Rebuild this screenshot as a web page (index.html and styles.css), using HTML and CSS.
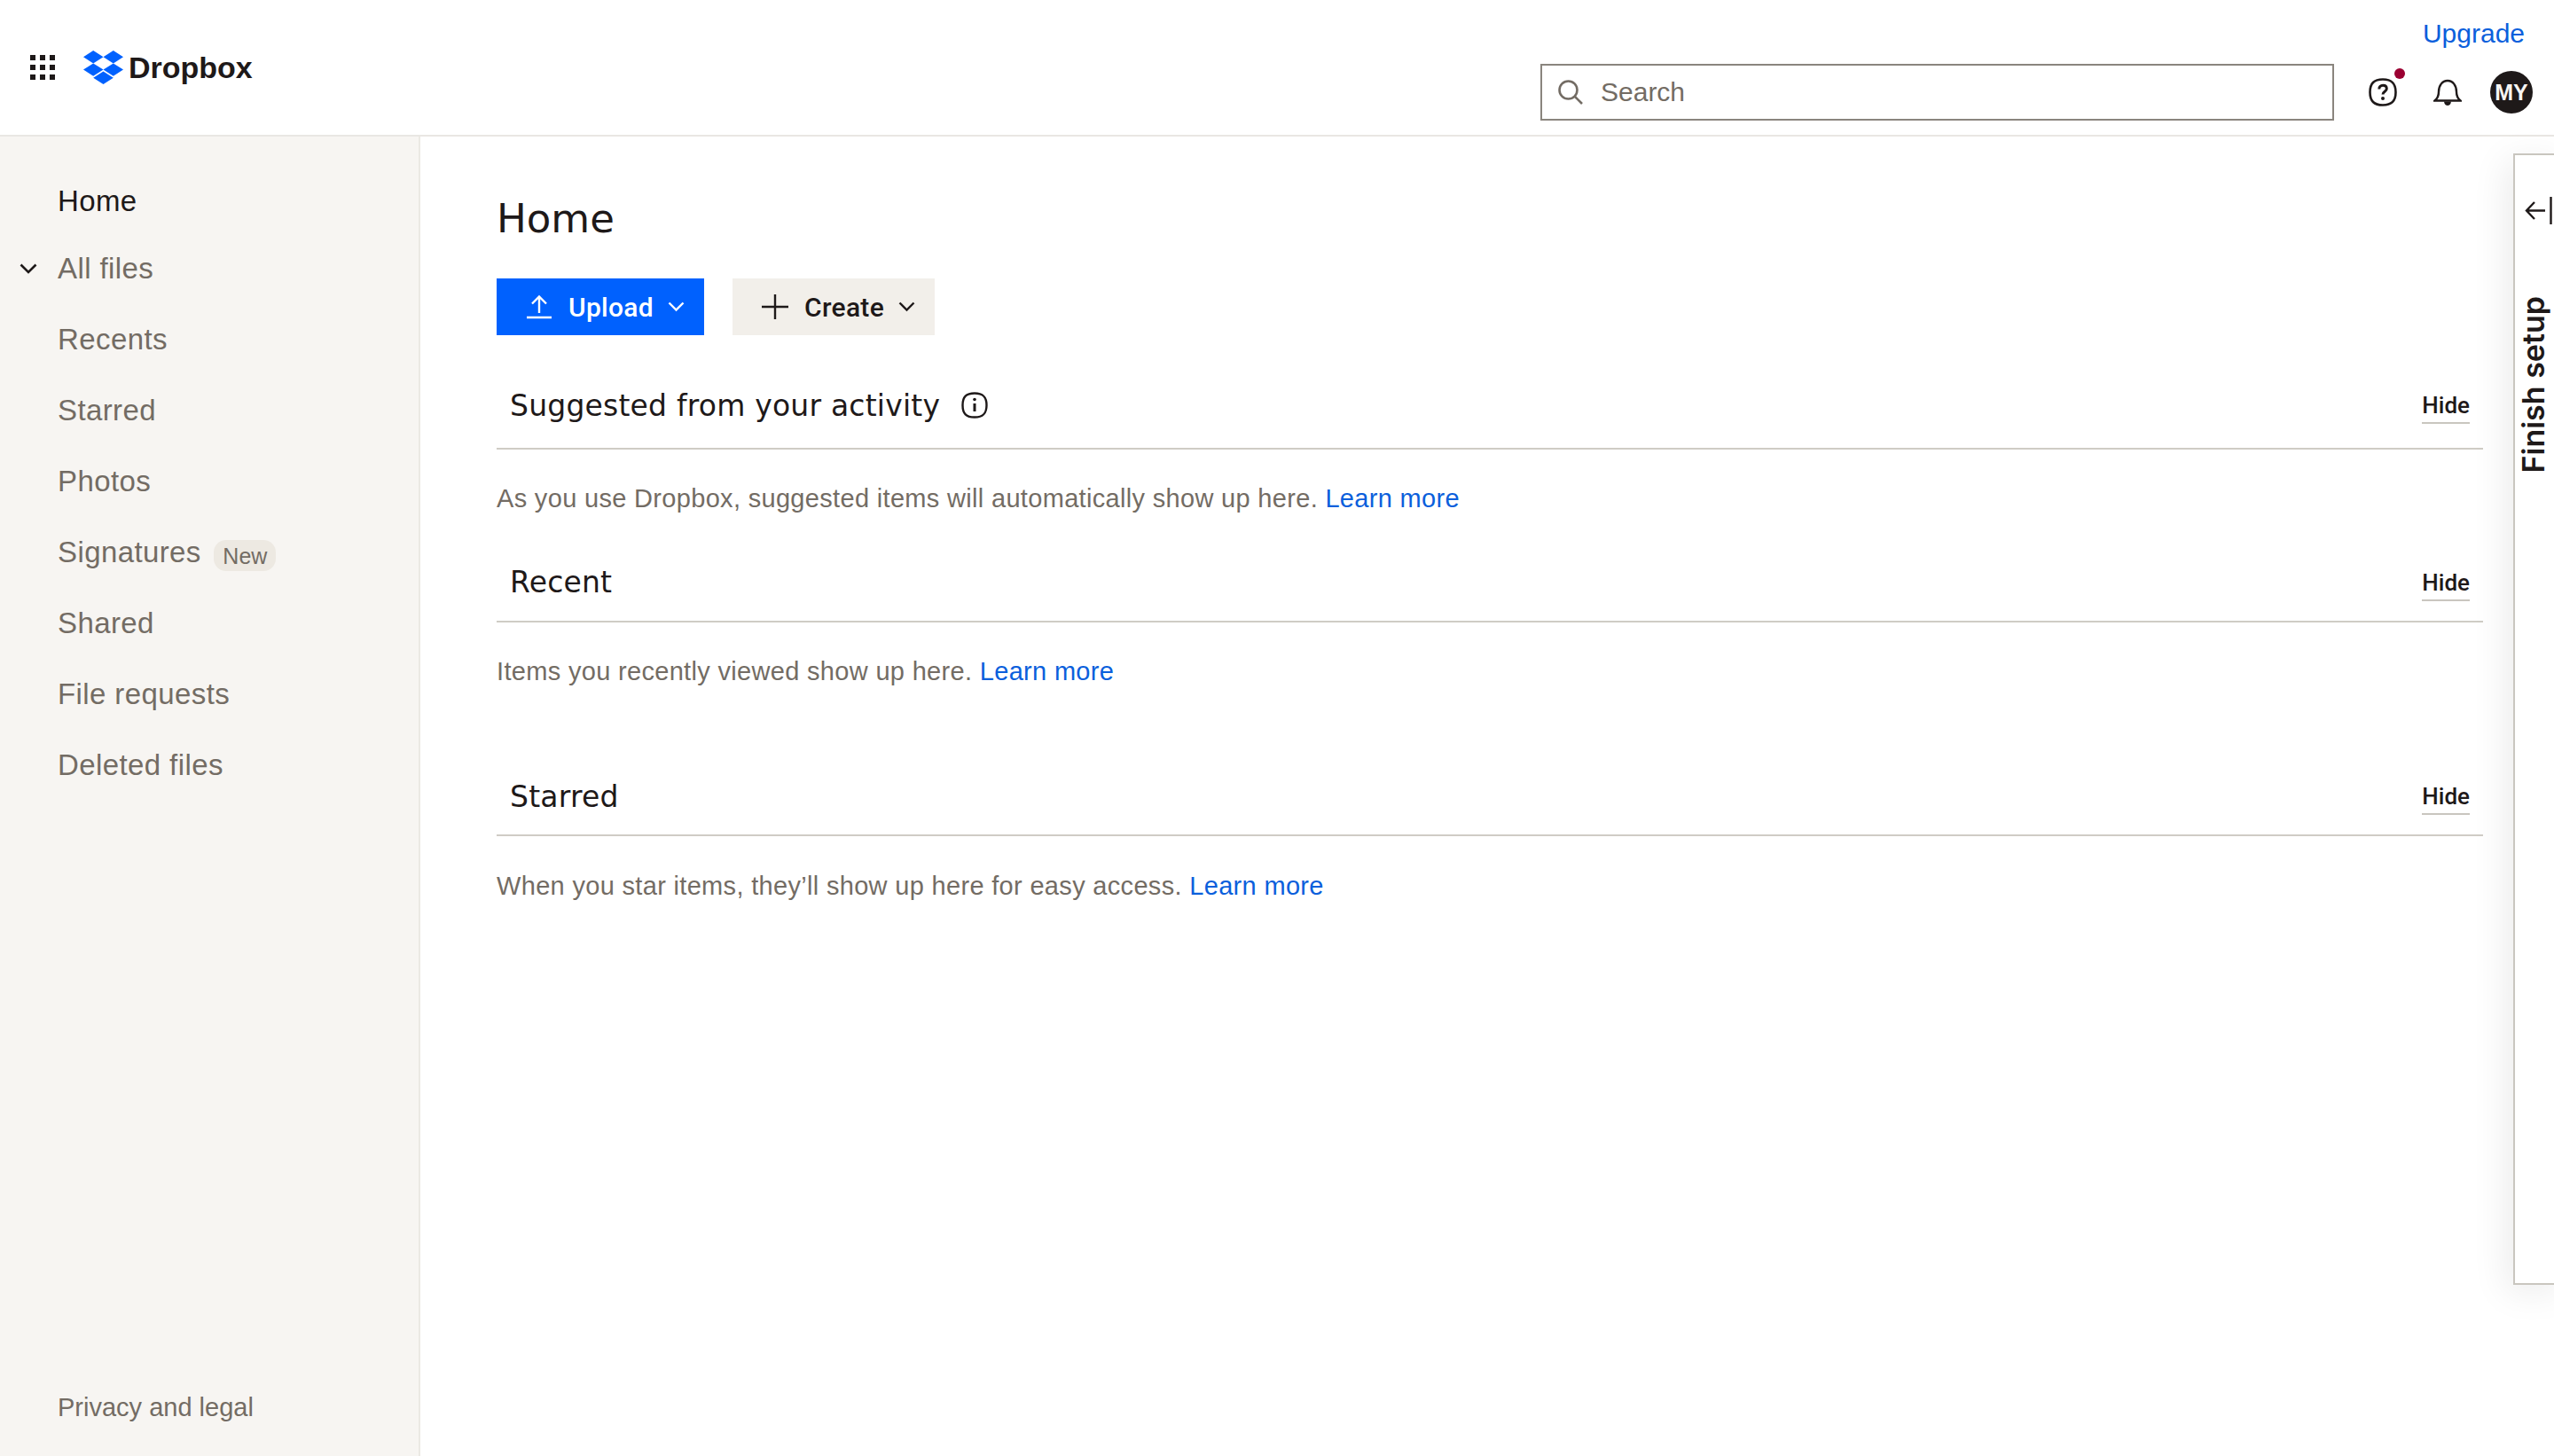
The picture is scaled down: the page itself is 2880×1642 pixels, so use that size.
FILE: index.html
```html
<!DOCTYPE html>
<html lang="en">
<head>
  <meta charset="UTF-8">
  <meta name="viewport" content="width=device-width, initial-scale=1.0">
  <title>Dropbox - Home</title>
  <link rel="stylesheet" href="styles.css">
</head>
<body>
  <header class="topbar">
    <div class="brand">
      <svg class="app-grid" viewBox="0 0 28 28" width="28" height="28" fill="#1e1919">
        <rect x="0" y="0" width="6" height="6"/><rect x="11" y="0" width="6" height="6"/><rect x="22" y="0" width="6" height="6"/>
        <rect x="0" y="11" width="6" height="6"/><rect x="11" y="11" width="6" height="6"/><rect x="22" y="11" width="6" height="6"/>
        <rect x="0" y="22" width="6" height="6"/><rect x="11" y="22" width="6" height="6"/><rect x="22" y="22" width="6" height="6"/>
      </svg>
      <svg class="logo-mark" viewBox="0 0 45 38" width="45" height="38" fill="#0061fe">
        <polygon points="11.2,0 22.5,7.2 11.2,14.4 0,7.2"/>
        <polygon points="33.8,0 45,7.2 33.8,14.4 22.5,7.2"/>
        <polygon points="11.2,14.4 22.5,21.6 11.2,28.8 0,21.6"/>
        <polygon points="33.8,14.4 45,21.6 33.8,28.8 22.5,21.6"/>
        <polygon points="22.5,23.6 33.8,30.8 22.5,38 11.2,30.8"/>
      </svg>
      <span class="logo-text">Dropbox</span>
    </div>
    <div class="top-right">
      <a class="upgrade" href="#">Upgrade</a>
      <div class="top-tools">
        <div class="search">
          <svg viewBox="0 0 28 28" width="28" height="28" fill="none" stroke="#736c64" stroke-width="2.6">
            <circle cx="11.500" cy="11.500" r="10"/><path d="M18.500 18.500l8.500 8.500"/>
          </svg>
          <span>Search</span>
        </div>
        <div class="help">
          <svg viewBox="0 0 32 32" width="32" height="32" fill="none" stroke="#1e1919" stroke-width="2.6">
            <path d="M16 1.500c10 0 14.500 4.500 14.500 14.500s-4.500 14.500-14.500 14.500s-14.500-4.500-14.500-14.500s4.500-14.500 14.500-14.500z"/>
            <path d="M11.800 12.500c0-2.800 1.800-4.300 4.300-4.300s4.200 1.500 4.200 3.800c0 3.300-4.300 3.300-4.300 6.500" stroke-width="3"/>
            <circle cx="16" cy="23" r="2" fill="#1e1919" stroke="none"/>
          </svg>
          <i class="help-dot"></i>
        </div>
        <svg class="bell" viewBox="0 0 32 32" width="32" height="32" fill="none" stroke="#1e1919" stroke-width="2.400">
          <path d="M1.500 25.500c2.500-2 4.500-4 4.500-10c0-7 4-12.500 10-12.500s10 5.500 10 12.500c0 6 2 8 4.500 10z"/>
          <path d="M12 26.500c.5 6 7.500 6 8 0z" fill="#1e1919" stroke="none"/>
        </svg>
        <div class="avatar">MY</div>
      </div>
    </div>
  </header>

  <div class="layout">
    <nav class="sidebar">
      <ul class="nav-list">
        <li class="nav-item active">Home</li>
        <li class="nav-item nav-files">
          <svg class="nav-caret" viewBox="0 0 20 12" width="20" height="12" fill="none" stroke="#1e1919" stroke-width="2.600"><path d="M1.500 1.500l8.500 8.500l8.500-8.500"/></svg>
          All files
        </li>
        <li class="nav-item">Recents</li>
        <li class="nav-item">Starred</li>
        <li class="nav-item">Photos</li>
        <li class="nav-item">Signatures <span class="badge">New</span></li>
        <li class="nav-item">Shared</li>
        <li class="nav-item">File requests</li>
        <li class="nav-item">Deleted files</li>
      </ul>
      <a class="legal" href="#">Privacy and legal</a>
    </nav>

    <main class="content">
      <h1 class="page-title">Home</h1>
      <div class="actions">
        <button class="btn btn-primary">
          <svg class="btn-icon" viewBox="0 0 30 28" width="30" height="28" fill="none" stroke="#fff" stroke-width="2.400"><path d="M15 21V3M7 10.500l8-8l8 8M1 26h28"/></svg>
          Upload
          <svg class="btn-caret" viewBox="0 0 19 12" width="19" height="12" fill="none" stroke="#fff" stroke-width="2.400"><path d="M1.500 1.500l8 8l8-8"/></svg>
        </button>
        <button class="btn btn-secondary">
          <svg class="btn-icon" viewBox="0 0 30 30" width="30" height="30" fill="none" stroke="#1e1919" stroke-width="2.400"><path d="M15 1v28M0 15h30"/></svg>
          Create
          <svg class="btn-caret" viewBox="0 0 19 12" width="19" height="12" fill="none" stroke="#1e1919" stroke-width="2.400"><path d="M1.500 1.500l8 8l8-8"/></svg>
        </button>
      </div>

      <section class="block block-suggested">
        <div class="block-head">
          <h2>Suggested from your activity</h2>
          <svg class="info" viewBox="0 0 30 30" width="30" height="30" fill="none" stroke="#1e1919" stroke-width="2.400">
            <path d="M15 1.500c9.500 0 13.500 4 13.500 13.500s-4 13.500-13.500 13.500s-13.500-4-13.500-13.500s4-13.500 13.500-13.500z"/>
            <path d="M15 13v9" stroke-width="3"/><circle cx="15" cy="8.500" r="1.800" fill="#1e1919" stroke="none"/>
          </svg>
          <a class="hide" href="#">Hide</a>
        </div>
        <p>As you use Dropbox, suggested items will automatically show up here. <a href="#">Learn more</a></p>
      </section>

      <section class="block block-recent">
        <div class="block-head">
          <h2>Recent</h2>
          <a class="hide" href="#">Hide</a>
        </div>
        <p>Items you recently viewed show up here. <a href="#">Learn more</a></p>
      </section>

      <section class="block block-starred">
        <div class="block-head">
          <h2>Starred</h2>
          <a class="hide" href="#">Hide</a>
        </div>
        <p>When you star items, they’ll show up here for easy access. <a href="#">Learn more</a></p>
      </section>
    </main>
  </div>

  <aside class="setup-panel">
    <svg class="setup-icon" viewBox="0 0 32 31" width="32" height="31" fill="none" stroke="#1e1919" stroke-width="2.400">
      <path d="M23 15.500H2M11 6L2 15.500l9 9.500M29.500 0v31"/>
    </svg>
    <span class="setup-label">Finish setup</span>
  </aside>
</body>
</html>
```

FILE: styles.css
```css
* {
  box-sizing: border-box;
}

html, body {
  height: 100%;
}

body {
  margin: 0;
  overflow: hidden;
  background: #fff;
  color: #1e1919;
  font-family: "Liberation Sans", Arial, sans-serif;
}

a {
  color: #0b5fdc;
  text-decoration: none;
}

/* top bar */
.topbar {
  display: flex;
  justify-content: space-between;
  height: 154px;
  border-bottom: 2px solid #e9e7e3;
}

.brand {
  display: flex;
  align-items: center;
  padding-left: 34px;
}

.logo-mark {
  margin-left: 32px;
}

.logo-text {
  margin-left: 6px;
  font-size: 34px;
  font-weight: 700;
}

.top-right {
  display: flex;
  flex-direction: column;
  align-items: flex-end;
  padding: 21px 24px 0 0;
}

.upgrade {
  height: 34px;
  margin: 0 9px 17px 0;
  font-size: 30px;
  line-height: 34px;
}

.top-tools {
  display: flex;
  align-items: center;
}

.search {
  display: flex;
  align-items: center;
  width: 895px;
  height: 64px;
  padding-left: 18px;
  border: 2px solid #8a857e;
  color: #736c64;
  font-size: 30px;
}

.search span {
  margin-left: 20px;
}

.help {
  position: relative;
  display: flex;
  margin-left: 39px;
}

.help-dot {
  position: absolute;
  top: -11px;
  right: -9px;
  width: 12px;
  height: 12px;
  border-radius: 50%;
  background: #9b0032;
}

.bell {
  margin-left: 41px;
}

.avatar {
  display: flex;
  align-items: center;
  justify-content: center;
  width: 48px;
  height: 48px;
  margin-left: 32px;
  border-radius: 50%;
  background: #1e1919;
  color: #f7f5f2;
  font-size: 25px;
  font-weight: 700;
}

/* page */
.layout {
  display: flex;
  height: calc(100% - 154px);
}

.sidebar {
  display: flex;
  flex-direction: column;
  justify-content: space-between;
  flex-shrink: 0;
  width: 474px;
  padding: 33px 0 38px 65px;
  background: #f7f5f2;
  border-right: 2px solid #ebe9e4;
}

.nav-list {
  margin: 0;
  padding: 0;
  list-style: none;
}

.nav-item {
  position: relative;
  height: 80px;
  color: #736c64;
  font-size: 33px;
  letter-spacing: 0.4px;
  line-height: 80px;
}

.nav-item.active {
  height: 76px;
  color: #1e1919;
}

.nav-caret {
  position: absolute;
  top: 34px;
  left: -43px;
}

.badge {
  display: inline-block;
  height: 35px;
  margin-left: 5px;
  padding: 0 10px;
  border-radius: 14px;
  background: #ede9e2;
  font-size: 25px;
  letter-spacing: 0;
  line-height: 37px;
  vertical-align: -2px;
}

.legal {
  color: #736c64;
  font-size: 29px;
}

.content {
  flex: 1;
  padding: 0 80px 0 86px;
}

.page-title {
  margin: 0;
  padding-top: 65px;
  font-family: "DejaVu Sans", sans-serif;
  font-size: 45px;
  font-weight: 400;
  line-height: 56px;
}

.actions {
  display: flex;
  gap: 32px;
  margin-top: 39px;
}

.btn {
  display: flex;
  align-items: center;
  height: 64px;
  padding: 0 0 0 33px;
  border: 0;
  font-family: Roboto, "Liberation Sans", sans-serif;
  font-size: 30px;
  font-weight: 500;
  letter-spacing: 0.3px;
}

.btn svg {
  flex-shrink: 0;
}

.btn-icon {
  margin-right: 18px;
}

.btn-caret {
  margin-left: 16px;
}

.btn-primary {
  width: 234px;
  background: #0061fe;
  color: #fff;
}

.btn-secondary {
  width: 228px;
  background: #f2efea;
  color: #1e1919;
}

.block-head {
  display: flex;
  align-items: center;
  padding: 0 15px;
  border-bottom: 2px solid #cfccc5;
}

.block-head h2 {
  margin: 0;
  font-family: "DejaVu Sans", sans-serif;
  font-size: 33px;
  font-weight: 400;
  letter-spacing: 0.2px;
}

.info {
  margin-left: 24px;
}

.hide {
  margin-left: auto;
  padding: 6px 0 4px;
  border-bottom: 2px solid #c9c6bf;
  color: #1e1919;
  font-family: Roboto, "Liberation Sans", sans-serif;
  font-size: 26px;
  font-weight: 500;
}

.block p {
  margin: 0;
  color: #736c64;
  font-size: 29px;
  letter-spacing: 0.32px;
  line-height: 40px;
}

.block-suggested {
  margin-top: 29px;
}

.block-suggested .block-head {
  height: 100px;
  padding-top: 2px;
}

.block-suggested p {
  margin-top: 35px;
}

.block-recent {
  margin-top: 31px;
}

.block-recent .block-head {
  height: 89px;
}

.block-recent p {
  margin-top: 35px;
}

.block-starred {
  margin-top: 76px;
}

.block-starred .block-head {
  height: 90px;
  padding-top: 2px;
}

.block-starred p {
  margin-top: 36px;
}

/* collapsed onboarding panel */
.setup-panel {
  position: absolute;
  top: 173px;
  left: 2834px;
  width: 60px;
  height: 1276px;
  background: #fff;
  border: 2px solid #c9c6bf;
  box-shadow: -8px 8px 40px rgba(0, 0, 0, 0.08);
}

.setup-icon {
  position: absolute;
  top: 47px;
  left: 11px;
}

.setup-label {
  position: absolute;
  top: 159px;
  left: 2px;
  color: #1e1919;
  font-family: Inter, "Liberation Sans", sans-serif;
  font-size: 34px;
  font-weight: 600;
  line-height: 38px;
  white-space: nowrap;
  writing-mode: vertical-rl;
  transform: rotate(180deg);
}
```
